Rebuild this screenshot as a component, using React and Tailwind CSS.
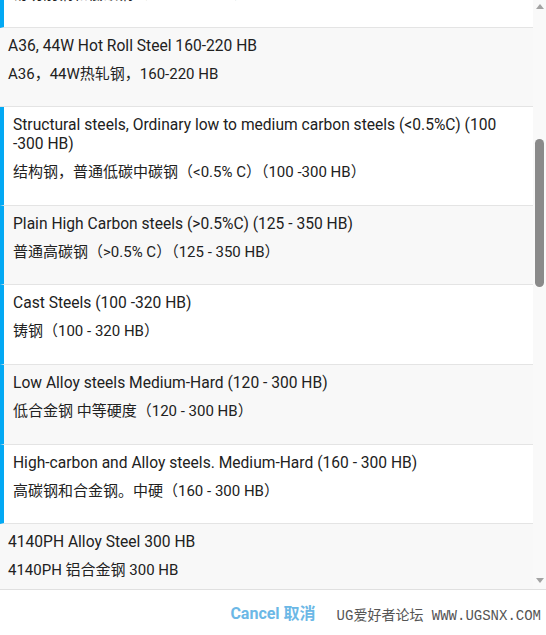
import React from 'react';

const materials = [
  { en: 'Free-cutting steels, Low carbon steels (100 - 250 HB)', zh: '易切削钢和低碳钢（100 - 250 HB）', group: true },
  { en: 'A36, 44W Hot Roll Steel 160-220 HB', zh: 'A36，44W热轧钢，160-220 HB', group: false },
  { en: 'Structural steels, Ordinary low to medium carbon steels (<0.5%C) (100 -300 HB)', zh: '结构钢，普通低碳中碳钢（<0.5% C）（100 -300 HB）', group: true },
  { en: 'Plain High Carbon steels (>0.5%C) (125 - 350 HB)', zh: '普通高碳钢（>0.5% C）（125 - 350 HB）', group: true },
  { en: 'Cast Steels (100 -320 HB)', zh: '铸钢（100 - 320 HB）', group: true },
  { en: 'Low Alloy steels Medium-Hard (120 - 300 HB)', zh: '低合金钢 中等硬度（120 - 300 HB）', group: true },
  { en: 'High-carbon and Alloy steels. Medium-Hard (160 - 300 HB)', zh: '高碳钢和合金钢。中硬（160 - 300 HB）', group: true },
  { en: '4140PH Alloy Steel 300 HB', zh: '4140PH 铝合金钢 300 HB', group: false },
  { en: '4340 Alloy Steel 200 - 250 HB', zh: '4340 合金钢 200 - 250 HB', group: false },
];

function MaterialRow({ item, index }) {
  const shade = index % 2 === 1 ? 'bg-[#f8f8f8]' : 'bg-white';
  const accent = item.group ? 'border-l-4 border-l-[#03a9f4] pl-[9px]' : 'pl-2';
  return (
    <div className={`${shade} ${accent} border-b border-b-[#e4e4e4] pr-2 pt-[9px] pb-[22.6px] leading-[19px] text-[#212121]`}>
      <p className="text-[15.6px]">{item.en}</p>
      <p className="mt-[9px] text-[15px]">{item.zh}</p>
    </div>
  );
}

function ScrollTrack() {
  return (
    <div className="flex w-[13px] flex-col items-center bg-[#f9f9f9]">
      <svg width="8" height="5" viewBox="0 0 8 5" className="mt-[4px]">
        <path d="M0 5 L4 0 L8 5 Z" fill="#a3a3a3" />
      </svg>
      <div className="mt-[130px] h-[148px] w-[9px] rounded-full bg-[#8a8a8a]" />
      <div className="flex-1" />
      <svg width="8" height="5" viewBox="0 0 8 5" className="mb-[6px]">
        <path d="M0 0 L8 0 L4 5 Z" fill="#a3a3a3" />
      </svg>
    </div>
  );
}

export default function App() {
  return (
    <div className="relative h-[635px] w-[546px] overflow-hidden bg-white font-['Roboto','Noto_Sans_CJK_SC',sans-serif]">
      <div className="flex h-[590px] border-b border-b-[#e0e0e0]">
        <div className="flex-1 overflow-hidden">
          <div className="-mt-[52px]">
            {materials.map((item, i) => (
              <MaterialRow key={i} item={item} index={i} />
            ))}
          </div>
        </div>
        <ScrollTrack />
      </div>

      <footer className="flex h-[45px] items-center justify-center pt-[3px]">
        <button className="text-[16px] font-bold text-[#6cb8e6]">Cancel 取消</button>
      </footer>

      <span className="absolute bottom-[8px] right-[5px] font-['Liberation_Mono','Noto_Sans_CJK_SC',monospace] text-[14px] text-[#555]">
        UG爱好者论坛 WWW.UGSNX.COM
      </span>
    </div>
  );
}
